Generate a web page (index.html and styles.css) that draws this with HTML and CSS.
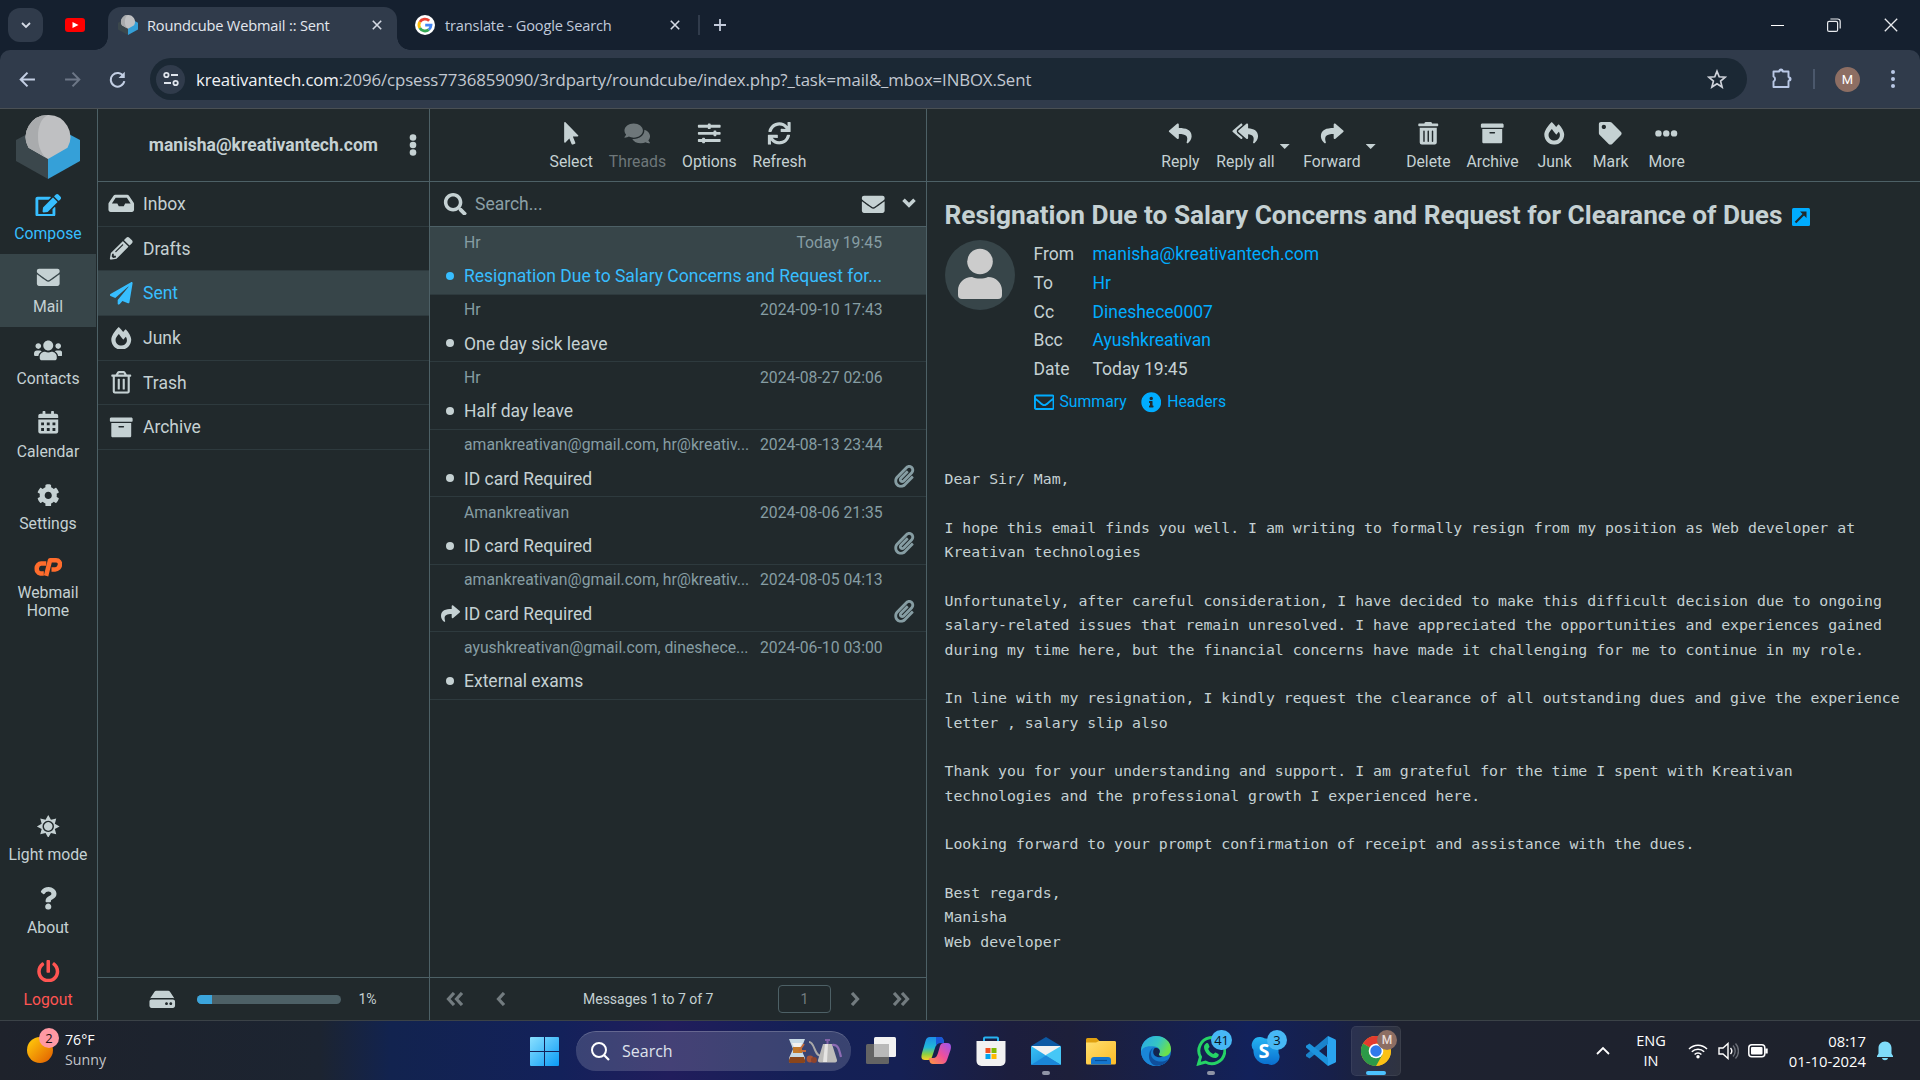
FILE: index.html
```html
<!DOCTYPE html>
<html lang="en">
<head>
<meta charset="utf-8">
<title>Roundcube Webmail :: Sent</title>
<link rel="stylesheet" href="styles.css">
</head>
<body>
<svg class="sprite" aria-hidden="true">
  <defs>
    <linearGradient id="gWin" x1="0" y1="0" x2="1" y2="1"><stop offset="0" stop-color="#8ae0ff"/><stop offset="1" stop-color="#0a9bf5"/></linearGradient>
    <linearGradient id="gSun" x1="0" y1="0" x2="1" y2="1"><stop offset="0.1" stop-color="#ffc60a"/><stop offset="1" stop-color="#e05a00"/></linearGradient>
    <linearGradient id="gCopA" x1="0" y1="0" x2="0" y2="1"><stop offset="0" stop-color="#1d8ee8"/><stop offset="0.45" stop-color="#21b8d8"/><stop offset="0.75" stop-color="#8fd03e"/><stop offset="1" stop-color="#ffd02a"/></linearGradient>
    <linearGradient id="gCopB" x1="1" y1="0" x2="0" y2="1"><stop offset="0" stop-color="#9a55f2"/><stop offset="0.5" stop-color="#f0509a"/><stop offset="1" stop-color="#ff9a3c"/></linearGradient>
    <linearGradient id="gEdge" x1="0" y1="0" x2="1" y2="0.4"><stop offset="0" stop-color="#2aa7e8"/><stop offset="0.6" stop-color="#35c6c4"/><stop offset="1" stop-color="#6be04c"/></linearGradient>
    <linearGradient id="gFold" x1="0" y1="0" x2="1" y2="1"><stop offset="0" stop-color="#ffdf70"/><stop offset="1" stop-color="#fdbc26"/></linearGradient>
    <linearGradient id="gMail" x1="0" y1="0" x2="1" y2="1"><stop offset="0" stop-color="#39c3f5"/><stop offset="1" stop-color="#1583d8"/></linearGradient>
    <linearGradient id="gSky" x1="0" y1="0" x2="0" y2="1"><stop offset="0" stop-color="#25b4f3"/><stop offset="1" stop-color="#0a6fd0"/></linearGradient>
  </defs>
  <symbol id="edit" viewBox="0 0 576 512"><path d="M402.6 83.2l90.2 90.2c3.8 3.8 3.8 10 0 13.8L274.4 405.6l-92.8 10.3c-12.4 1.4-22.9-9.1-21.5-21.5l10.3-92.8L388.8 83.2c3.8-3.8 10-3.8 13.8 0zm162-22.9l-48.8-48.8c-15.2-15.2-39.9-15.2-55.2 0l-35.4 35.4c-3.8 3.8-3.8 10 0 13.8l90.2 90.2c3.8 3.8 10 3.8 13.8 0l35.4-35.4c15.2-15.3 15.2-40 0-55.2zM384 346.2V448H64V128h229.8c3.2 0 6.2-1.3 8.5-3.5l40-40c7.6-7.6 2.2-20.5-8.5-20.5H48C21.5 64 0 85.5 0 112v352c0 26.5 21.5 48 48 48h352c26.5 0 48-21.5 48-48V306.2c0-10.7-12.9-16-20.5-8.5l-40 40c-2.2 2.3-3.5 5.3-3.5 8.5z"/></symbol>
  <symbol id="envelope" viewBox="0 0 512 512"><path d="M502.3 190.8c3.9-3.1 9.7-.2 9.7 4.7V400c0 26.5-21.5 48-48 48H48c-26.5 0-48-21.5-48-48V195.6c0-5 5.7-7.8 9.7-4.7 22.4 17.4 52.1 39.5 154.1 113.6 21.1 15.4 56.7 47.8 92.2 47.6 35.7.3 72-32.8 92.3-47.6 102-74.1 131.6-96.3 154-113.7zM256 320c23.2.4 56.6-29.2 73.4-41.4 132.7-96.3 142.8-104.7 173.4-128.7 5.8-4.5 9.2-11.5 9.2-18.9v-19c0-26.5-21.5-48-48-48H48c-26.5 0-48 21.5-48 48v19c0 7.4 3.4 14.3 9.2 18.9 30.6 23.9 40.7 32.4 173.4 128.7 16.8 12.2 50.2 41.8 73.4 41.4z"/></symbol>
  <symbol id="users" viewBox="0 0 640 512"><path d="M96 224c35.3 0 64-28.7 64-64s-28.7-64-64-64-64 28.7-64 64 28.7 64 64 64zm448 0c35.3 0 64-28.7 64-64s-28.7-64-64-64-64 28.7-64 64 28.7 64 64 64zm32 32h-64c-17.6 0-33.5 7.1-45.1 18.6 40.3 22.1 68.9 62 75.1 109.4h66c17.7 0 32-14.3 32-32v-32c0-35.3-28.7-64-64-64zm-256 0c61.9 0 112-50.1 112-112S381.9 32 320 32 208 82.1 208 144s50.1 112 112 112zm76.8 32h-8.3c-20.8 10-43.9 16-68.5 16s-47.6-6-68.5-16h-8.3C179.6 288 128 339.6 128 403.2V432c0 26.5 21.5 48 48 48h288c26.5 0 48-21.5 48-48v-28.8c0-63.6-51.6-115.2-115.2-115.2zm-223.7-13.4C161.5 263.1 145.6 256 128 256H64c-35.3 0-64 28.7-64 64v32c0 17.7 14.3 32 32 32h65.9c6.3-47.4 34.9-87.3 75.2-109.4z"/></symbol>
  <symbol id="calendar" viewBox="0 0 448 512"><path fill-rule="evenodd" d="M0 464c0 26.500 21.500 48 48 48h352c26.500 0 48-21.500 48-48V192H0v272zM320 256h64v64h-64zM320 384h64v64h-64zM192 256h64v64h-64zM192 384h64v64h-64zM64 256h64v64H64zM64 384h64v64H64zM400 64h-48V16c0-8.800-7.200-16-16-16h-32c-8.800 0-16 7.200-16 16v48H160V16c0-8.800-7.200-16-16-16h-32c-8.800 0-16 7.200-16 16v48H48C21.500 64 0 85.500 0 112v48h448v-48c0-26.500-21.500-48-48-48z"/></symbol>
  <symbol id="cog" viewBox="0 0 512 512"><path d="M487.4 315.7l-42.600-24.600c4.300-23.200 4.300-47 0-70.200l42.600-24.600c4.900-2.800 7.100-8.600 5.500-14-11.100-35.600-30-67.800-54.700-94.600-3.800-4.100-10-5.100-14.800-2.300L380.800 110c-17.900-15.400-38.500-27.300-60.800-35.100V25.800c0-5.600-3.900-10.500-9.400-11.700-36.700-8.200-74.300-7.800-109.200 0-5.500 1.200-9.400 6.100-9.400 11.700V75c-22.200 7.900-42.800 19.800-60.800 35.100L88.700 85.500c-4.900-2.800-11-1.900-14.800 2.300-24.700 26.700-43.600 58.900-54.700 94.600-1.700 5.400.6 11.200 5.500 14L67.300 221c-4.300 23.200-4.300 47 0 70.200l-42.600 24.600c-4.900 2.800-7.100 8.600-5.500 14 11.100 35.600 30 67.800 54.700 94.600 3.800 4.100 10 5.100 14.800 2.300l42.600-24.600c17.900 15.400 38.500 27.300 60.800 35.100v49.200c0 5.600 3.900 10.500 9.400 11.700 36.700 8.200 74.300 7.800 109.200 0 5.500-1.200 9.400-6.100 9.400-11.700v-49.200c22.200-7.900 42.800-19.800 60.800-35.100l42.600 24.600c4.900 2.800 11 1.900 14.800-2.300 24.700-26.700 43.600-58.900 54.700-94.600 1.500-5.500-.7-11.300-5.600-14.100zM256 336c-44.100 0-80-35.900-80-80s35.900-80 80-80 80 35.900 80 80-35.900 80-80 80z"/></symbol>
  <symbol id="cpanel" viewBox="0 0 29 20"><g fill="none" stroke="currentColor" stroke-width="4.600" stroke-linejoin="round"><path d="M12.500 6.500H7.300C1.800 6.500 1 15.800 6.500 16.500H10"/><path d="M12.300 19L16.300 3.200H22.500C28.500 3.200 27.300 12.500 21.500 12.500H17.800"/></g></symbol>
  <symbol id="inbox" viewBox="0 0 576 512"><path d="M567.938 243.908L462.250 85.374A48.003 48.003 0 0 0 422.311 64H153.689a48 48 0 0 0-39.938 21.374L8.062 243.908A47.994 47.994 0 0 0 0 270.533V400c0 26.510 21.490 48 48 48h480c26.510 0 48-21.490 48-48V270.533a47.994 47.994 0 0 0-8.062-26.625zM162.252 128h251.497l85.333 128H376l-32 64H232l-32-64H76.918l85.334-128z"/></symbol>
  <symbol id="pencil" viewBox="0 0 512 512"><path d="M497.900 142.100l-46.100 46.100c-4.700 4.700-12.300 4.700-17 0l-111-111c-4.700-4.700-4.700-12.300 0-17l46.100-46.100c18.700-18.700 49.100-18.700 67.900 0l60.100 60.100c18.800 18.700 18.800 49.100 0 67.900zM284.200 99.800L21.600 362.400.4 483.900c-2.900 16.400 11.400 30.600 27.800 27.800l121.500-21.300 262.600-262.600c4.700-4.700 4.700-12.300 0-17l-111-111c-4.800-4.700-12.400-4.700-17.100 0zM124.100 339.900c-5.500-5.500-5.500-14.300 0-19.800l154-154c5.500-5.500 14.300-5.500 19.800 0s5.500 14.300 0 19.800l-154 154c-5.500 5.500-14.300 5.500-19.800 0zM88 424h48v36.300l-64.500 11.300-31.100-31.100L51.700 376H88v48z"/></symbol>
  <symbol id="plane" viewBox="0 0 512 512"><path d="M476 3.200L12.500 270.600c-18.100 10.400-15.800 35.600 2.200 43.200L121 358.400l287.300-253.200c5.500-4.900 13.300 2.600 8.600 8.300L176 407v80.500c0 23.600 28.500 32.900 42.500 15.800L282 426l124.600 52.200c14.200 6 30.400-2.900 33-18.200l72-432C515 7.800 493.300-6.800 476 3.200z"/></symbol>
  <symbol id="fire" viewBox="0 0 448 512"><path d="M323.560 51.200c-20.800 19.300-39.580 39.590-56.220 59.970C240.080 73.620 206.280 35.530 168 0 69.740 91.170 0 209.960 0 281.600 0 408.850 100.290 512 224 512s224-103.150 224-230.400c0-53.270-51.980-163.140-124.440-230.400zm-19.470 340.650C282.430 407.010 255.720 416 226.860 416 154.710 416 96 368.260 96 290.750c0-38.610 24.310-72.630 72.790-130.750 6.930 7.980 98.830 125.340 98.830 125.340l58.630-66.880c4.140 6.850 7.910 13.550 11.270 19.970 27.350 52.190 15.810 118.970-33.430 153.420z"/></symbol>
  <symbol id="trash-o" viewBox="0 0 448 512"><path d="M268 416h24a12 12 0 0 0 12-12V188a12 12 0 0 0-12-12h-24a12 12 0 0 0-12 12v216a12 12 0 0 0 12 12zM432 80h-82.410l-34-56.700A48 48 0 0 0 274.410 0H173.590a48 48 0 0 0-41.160 23.300L98.410 80H16A16 16 0 0 0 0 96v16a16 16 0 0 0 16 16h16v336a48 48 0 0 0 48 48h288a48 48 0 0 0 48-48V128h16a16 16 0 0 0 16-16V96a16 16 0 0 0-16-16zM171.840 50.910A6 6 0 0 1 177 48h94a6 6 0 0 1 5.150 2.910L293.610 80H154.390zM368 464H80V128h288zm-212-48h24a12 12 0 0 0 12-12V188a12 12 0 0 0-12-12h-24a12 12 0 0 0-12 12v216a12 12 0 0 0 12 12z"/></symbol>
  <symbol id="trash" viewBox="0 0 448 512"><path d="M32 464a48 48 0 0 0 48 48h288a48 48 0 0 0 48-48V128H32zm272-256a16 16 0 0 1 32 0v224a16 16 0 0 1-32 0zm-96 0a16 16 0 0 1 32 0v224a16 16 0 0 1-32 0zm-96 0a16 16 0 0 1 32 0v224a16 16 0 0 1-32 0zM432 32H312l-9.400-18.700A24 24 0 0 0 281.100 0H166.800a23.720 23.720 0 0 0-21.400 13.300L136 32H16A16 16 0 0 0 0 48v32a16 16 0 0 0 16 16h416a16 16 0 0 0 16-16V48a16 16 0 0 0-16-16z"/></symbol>
  <symbol id="archive" viewBox="0 0 512 512"><path d="M32 448c0 17.700 14.300 32 32 32h384c17.700 0 32-14.300 32-32V160H32v288zm160-212c0-6.600 5.400-12 12-12h104c6.600 0 12 5.400 12 12v8c0 6.600-5.400 12-12 12H204c-6.600 0-12-5.400-12-12v-8zM480 32H32C14.300 32 0 46.300 0 64v48c0 8.800 7.200 16 16 16h480c8.800 0 16-7.200 16-16V64c0-17.700-14.300-32-32-32z"/></symbol>
  <symbol id="pointer" viewBox="0 0 320 512"><path d="M302.189 329.126H196.105l55.831 135.993c3.889 9.428-.555 19.999-9.444 23.999l-49.165 21.427c-9.165 4-19.443-.571-23.332-9.714l-53.053-129.136-86.664 89.138C18.729 472.710 0 463.554 0 447.977V18.299C0 1.899 19.921-6.096 30.277 5.443l284.412 292.542c11.472 11.179 3.007 31.141-12.500 31.141z"/></symbol>
  <symbol id="comments" viewBox="0 0 576 512"><path d="M416 192c0-88.400-93.100-160-208-160S0 103.600 0 192c0 34.300 14.100 65.900 38 92-13.400 30.200-35.500 54.200-35.800 54.500-2.200 2.300-2.800 5.700-1.500 8.700S4.800 352 8 352c36.600 0 66.900-12.300 88.700-25 32.200 15.700 70.300 25 111.300 25 114.900 0 208-71.600 208-160zm122 220c23.900-26 38-57.700 38-92 0-66.900-53.500-124.200-129.300-148.100.9 6.600 1.300 13.300 1.300 20.100 0 105.900-107.700 192-240 192-10.800 0-21.300-.8-31.700-1.900C207.800 439.600 281.800 480 368 480c41 0 79.100-9.200 111.300-25 21.800 12.700 52.100 25 88.700 25 3.200 0 6.100-1.900 7.300-4.800 1.300-2.900.7-6.300-1.500-8.700-.3-.3-22.400-24.200-35.800-54.500z"/></symbol>
  <symbol id="sliders" viewBox="0 0 512 512"><path d="M496 384H160v-16c0-8.800-7.200-16-16-16h-32c-8.800 0-16 7.200-16 16v16H16c-8.800 0-16 7.200-16 16v32c0 8.800 7.200 16 16 16h80v16c0 8.800 7.200 16 16 16h32c8.800 0 16-7.200 16-16v-16h336c8.800 0 16-7.200 16-16v-32c0-8.800-7.200-16-16-16zm0-160h-80v-16c0-8.800-7.200-16-16-16h-32c-8.800 0-16 7.200-16 16v16H16c-8.800 0-16 7.200-16 16v32c0 8.800 7.200 16 16 16h336v16c0 8.800 7.200 16 16 16h32c8.800 0 16-7.200 16-16v-16h80c8.800 0 16-7.200 16-16v-32c0-8.800-7.200-16-16-16zm0-160H288V48c0-8.800-7.200-16-16-16h-32c-8.800 0-16 7.200-16 16v16H16C7.200 64 0 71.200 0 80v32c0 8.800 7.200 16 16 16h208v16c0 8.800 7.200 16 16 16h32c8.800 0 16-7.200 16-16v-16h208c8.800 0 16-7.200 16-16V80c0-8.800-7.200-16-16-16z"/></symbol>
  <symbol id="sync" viewBox="0 0 512 512"><path d="M440.650 12.570l4 82.770A247.160 247.160 0 0 0 255.830 8C134.730 8 33.910 94.920 12.290 209.820A12 12 0 0 0 24.090 224h49.050a12 12 0 0 0 11.670-9.260 175.910 175.910 0 0 1 317-56.940l-101.460-4.860a12 12 0 0 0-12.570 12v47.410a12 12 0 0 0 12 12H500a12 12 0 0 0 12-12V12a12 12 0 0 0-12-12h-47.370a12 12 0 0 0-11.980 12.570zM255.830 432a175.610 175.610 0 0 1-146-77.800l101.800 4.870a12 12 0 0 0 12.570-12v-47.400a12 12 0 0 0-12-12H12a12 12 0 0 0-12 12V500a12 12 0 0 0 12 12h47.350a12 12 0 0 0 12-12.600l-4.150-82.570A247.170 247.170 0 0 0 255.830 504c121.110 0 221.930-86.920 243.550-201.820a12 12 0 0 0-11.800-14.180h-49.050a12 12 0 0 0-11.670 9.260A175.860 175.860 0 0 1 255.830 432z"/></symbol>
  <symbol id="search" viewBox="0 0 512 512"><path d="M505 442.700L405.300 343c-4.500-4.500-10.600-7-17-7H372c27.600-35.300 44-79.700 44-128C416 93.100 322.900 0 208 0S0 93.100 0 208s93.100 208 208 208c48.300 0 92.700-16.400 128-44v16.300c0 6.400 2.500 12.500 7 17l99.700 99.700c9.400 9.400 24.600 9.400 33.900 0l28.300-28.300c9.400-9.400 9.400-24.600.1-34zM208 336c-70.700 0-128-57.200-128-128 0-70.700 57.200-128 128-128 70.700 0 128 57.200 128 128 0 70.700-57.200 128-128 128z"/></symbol>
  <symbol id="reply" viewBox="0 0 512 512"><path d="M8.309 189.836L184.313 37.851C199.719 24.546 224 35.347 224 56.015v80.053c160.629 1.839 288 34.032 288 186.258 0 61.441-39.581 122.309-83.333 154.132-13.653 9.931-33.111-2.533-28.077-18.631 45.344-145.012-21.507-183.510-176.590-185.742V360c0 20.700-24.300 31.453-39.687 18.164l-176.004-152c-11.071-9.562-11.086-26.753 0-36.328z"/></symbol>
  <symbol id="forward" viewBox="0 0 512 512"><path d="M503.691 189.836L327.687 37.851C312.281 24.546 288 35.347 288 56.015v80.053C127.371 137.907 0 170.100 0 322.326c0 61.441 39.581 122.309 83.333 154.132 13.653 9.931 33.111-2.533 28.077-18.631C66.066 312.814 132.917 274.316 288 272.085V360c0 20.700 24.300 31.453 39.687 18.164l176.004-152c11.071-9.562 11.086-26.753 0-36.328z"/></symbol>
  <symbol id="replyall" viewBox="0 0 576 512"><path d="M136.309 189.836L312.313 37.851C327.720 24.546 352 35.348 352 56.015v82.763c129.182 10.231 224 52.212 224 183.548 0 61.441-39.582 122.309-83.333 154.132-13.653 9.931-33.111-2.533-28.077-18.631 38.512-123.162-3.922-169.482-112.590-182.015v84.175c0 20.701-24.300 31.453-39.687 18.164L136.309 226.164c-11.071-9.561-11.086-26.753 0-36.328zm-128 36.328L184.313 378.150C199.700 391.439 224 380.687 224 359.986v-15.818l-108.606-93.785A55.960 55.960 0 0 1 96 207.998a55.953 55.953 0 0 1 19.393-42.380L224 71.832V56.015c0-20.667-24.280-31.469-39.687-18.164L8.309 189.836c-11.086 9.575-11.071 26.767 0 36.328z"/></symbol>
  <symbol id="tag" viewBox="0 0 512 512"><path d="M0 252.118V48C0 21.490 21.490 0 48 0h204.118a48 48 0 0 1 33.941 14.059l211.882 211.882c18.745 18.745 18.745 49.137 0 67.882L293.823 497.941c-18.745 18.745-49.137 18.745-67.882 0L14.059 286.059A48 48 0 0 1 0 252.118zM112 64c-26.510 0-48 21.490-48 48s21.490 48 48 48 48-21.490 48-48-21.490-48-48-48z"/></symbol>
  <symbol id="more" viewBox="0 0 512 512"><circle cx="80" cy="256" r="72"/><circle cx="256" cy="256" r="72"/><circle cx="432" cy="256" r="72"/></symbol>
  <symbol id="clip" viewBox="0 0 448 512"><path d="M43.246 466.142c-58.430-60.289-57.341-157.511 1.386-217.581L254.392 34c44.316-45.332 116.351-45.336 160.671 0 43.890 44.894 43.943 117.329 0 162.276L232.214 383.128c-29.855 30.537-78.633 30.111-107.982-.998-28.275-29.970-27.368-77.473 1.452-106.953l143.743-146.835c6.182-6.314 16.312-6.422 22.626-.241l22.861 22.379c6.315 6.182 6.422 16.312.241 22.626L171.427 319.927c-4.932 5.045-5.236 13.428-.648 18.292 4.372 4.634 11.245 4.711 15.688.165l182.849-186.851c19.613-20.062 19.613-52.725-.011-72.798-19.189-19.627-49.957-19.637-69.154 0L90.390 293.295c-34.763 35.560-35.299 93.120-1.191 128.313 34.010 35.093 88.985 35.137 123.058.286l172.060-175.999c6.177-6.319 16.307-6.433 22.626-.256l22.877 22.364c6.319 6.177 6.434 16.307.256 22.626l-172.060 175.998c-59.576 60.938-155.943 60.216-214.770-.485z"/></symbol>
  <symbol id="power" viewBox="0 0 512 512"><path d="M400 54.100c63 45 104 118.600 104 201.900 0 136.800-110.800 247.700-247.500 248C120 504.300 8.200 393 8 256.400 7.900 173.100 48.900 99.300 111.800 54.200c11.700-8.300 28-4.800 35 7.700L162.600 90c5.900 10.500 3.100 23.800-6.600 31-41.500 30.800-68 79.600-68 134.900-.1 92.300 74.500 168.100 168 168.100 91.600 0 168.600-74.200 168-169.100-.3-51.800-24.700-101.800-68.100-134-9.700-7.200-12.400-20.500-6.500-30.900l15.800-28.100c7-12.400 23.200-16.100 34.800-7.800zM296 264V24c0-13.300-10.700-24-24-24h-32c-13.300 0-24 10.700-24 24v240c0 13.300 10.700 24 24 24h32c13.300 0 24-10.700 24-24z"/></symbol>
  <symbol id="question" viewBox="0 0 384 512"><path d="M202.021 0C122.202 0 70.503 32.703 29.914 91.026c-7.363 10.580-5.093 25.086 5.178 32.874l43.138 32.709c10.373 7.865 25.132 6.026 33.253-4.148 25.049-31.381 43.630-49.449 82.757-49.449 30.764 0 68.816 19.799 68.816 49.631 0 22.552-18.617 34.134-48.993 51.164-35.423 19.860-82.299 44.576-82.299 106.405V320c0 13.255 10.745 24 24 24h72.471c13.255 0 24-10.745 24-24v-5.773c0-42.860 125.268-44.645 125.268-160.627C377.504 66.256 286.902 0 202.021 0zM192 373.459c-38.196 0-69.271 31.075-69.271 69.271 0 38.195 31.075 69.270 69.271 69.270s69.271-31.075 69.271-69.271-31.075-69.270-69.271-69.270z"/></symbol>
  <symbol id="sun" viewBox="0 0 512 512"><path fill-rule="evenodd" d="M256 0l61 108 119-32-32 119 108 61-108 61 32 119-119-32-61 108-61-108-119 32 32-119L0 256l108-61L76 76l119 32zM256 128a128 128 0 1 0 .1 0zM256 160a96 96 0 1 1-.1 0z"/></symbol>
  <symbol id="hdd" viewBox="0 0 576 512"><path d="M576 304v96c0 26.510-21.490 48-48 48H48c-26.510 0-48-21.490-48-48v-96c0-26.510 21.490-48 48-48h480c26.510 0 48 21.490 48 48zm-48-80a79.557 79.557 0 0 1 30.777 6.165L462.250 85.374A48.003 48.003 0 0 0 422.311 64H153.689a48 48 0 0 0-39.938 21.374L17.223 230.165A79.557 79.557 0 0 1 48 224h480zm-48 96c-17.673 0-32 14.327-32 32s14.327 32 32 32 32-14.327 32-32-14.327-32-32-32zm-96 0c-17.673 0-32 14.327-32 32s14.327 32 32 32 32-14.327 32-32-14.327-32-32-32z"/></symbol>
  <symbol id="envelope-o" viewBox="0 0 512 512"><path d="M464 64H48C21.490 64 0 85.490 0 112v288c0 26.510 21.490 48 48 48h416c26.510 0 48-21.490 48-48V112c0-26.510-21.490-48-48-48zm0 48v40.805c-22.422 18.259-58.168 46.651-134.587 106.490-16.841 13.247-50.201 45.072-73.413 44.701-23.208.375-56.579-31.459-73.413-44.701C106.180 199.465 70.425 171.067 48 152.805V112h416zM48 400V214.398c22.914 18.251 55.409 43.862 104.938 82.646 21.857 17.205 60.134 55.186 103.062 54.955 42.717.231 80.509-37.199 103.053-54.947 49.528-38.783 82.032-64.401 104.947-82.653V400H48z"/></symbol>
  <symbol id="info" viewBox="0 0 512 512"><path d="M256 8C119.043 8 8 119.083 8 256c0 136.997 111.043 248 248 248s248-111.003 248-248C504 119.083 392.957 8 256 8zm0 110c23.196 0 42 18.804 42 42s-18.804 42-42 42-42-18.804-42-42 18.804-42 42-42zm56 254c0 6.627-5.373 12-12 12h-88c-6.627 0-12-5.373-12-12v-24c0-6.627 5.373-12 12-12h12v-64h-12c-6.627 0-12-5.373-12-12v-24c0-6.627 5.373-12 12-12h64c6.627 0 12 5.373 12 12v100h12c6.627 0 12 5.373 12 12v24z"/></symbol>
  <symbol id="logo" viewBox="0 0 64 64"><path fill="#3b474c" d="M0 25l32-17v56L0 46z"/><path fill="#35a0d8" d="M64 25L32 8v56l32-18z"/><path fill="#bfc0c2" d="M32 0a22 22 0 0 1 19.500 32.800L32 44 12.500 32.800A22 22 0 0 1 32 0z"/><path fill="#a9abad" d="M32 0C25 3 22 12 22 21s2 15 7 21l-16.500-9.200A22 22 0 0 1 32 0z"/></symbol>
  <symbol id="x" viewBox="0 0 10 10"><path d="M.8.8l8.400 8.400M9.200.8L.8 9.200" fill="none" stroke="currentColor" stroke-width="1.600"/></symbol>
</svg>

<header class="browser">
  <div class="tabstrip">
    <span class="tab-search"><svg width="12" height="12" viewBox="0 0 12 12"><path d="M2 4l4 4 4-4" fill="none" stroke="#d5dbe6" stroke-width="1.800"/></svg></span>
    <svg class="pinned" width="20" height="14" viewBox="0 0 20 14"><rect width="20" height="14" rx="3" fill="#f00"/><path d="M7.500 4l6 3-6 3z" fill="#fff"/></svg>
    <div class="tab active">
      <svg class="fav"><use href="#logo"/></svg>
      <span class="tab-title">Roundcube Webmail :: Sent</span>
      <svg class="close"><use href="#x"/></svg>
    </div>
    <div class="tab second">
      <svg class="fav" viewBox="0 0 20 20"><circle cx="10" cy="10" r="10" fill="#fff"/><g fill="none" stroke-width="2.800"><path d="M14.200 5.800A6 6 0 0 0 4.800 7" stroke="#ea4335"/><path d="M4.800 7a6 6 0 0 0 0 6" stroke="#fbbc05"/><path d="M4.800 13a6 6 0 0 0 9 1.600" stroke="#34a853"/><path d="M13.800 14.600A6 6 0 0 0 16 10.200H10.200" stroke="#4285f4"/></g></svg>
      <span class="tab-title">translate - Google Search</span>
      <svg class="close"><use href="#x"/></svg>
    </div>
    <span class="tab-sep"></span>
    <svg class="newtab" width="14" height="14" viewBox="0 0 14 14"><path d="M7 1v12M1 7h12" stroke="#c3cbdb" stroke-width="1.800"/></svg>
    <div class="winctl">
      <svg width="14" height="14" viewBox="0 0 14 14"><path d="M1 7.500h13" stroke="#fff"/></svg>
      <svg width="14" height="14" viewBox="0 0 14 14"><g fill="none" stroke="#e8eaee" stroke-width="1.200"><rect x=".6" y="3.400" width="10" height="10" rx="1.500"/><path d="M3.400 1h7.200a2.600 2.600 0 0 1 2.600 2.600v7"/></g></svg>
      <svg width="14" height="14" viewBox="0 0 14 14"><path d="M.8.800l12.400 12.400M13.200.800L.8 13.200" stroke="#e8eaee" stroke-width="1.300"/></svg>
    </div>
  </div>
  <div class="navbar">
    <svg class="nav" viewBox="0 0 16 16"><path d="M15 8H2M8 1.500L1.600 8 8 14.500" fill="none" stroke="#c3cfe4" stroke-width="1.900"/></svg>
    <svg class="nav" viewBox="0 0 16 16"><path d="M1 8h13M8 1.500L14.400 8 8 14.500" fill="none" stroke="#6d7787" stroke-width="1.900"/></svg>
    <svg class="nav" viewBox="0 0 16 16"><path d="M13.600 5A6.400 6.400 0 1 0 14.400 9.500" fill="none" stroke="#c3cfe4" stroke-width="1.900"/><path d="M14.800.8v5.700H9z" fill="#c3cfe4"/></svg>
    <div class="omnibox">
      <span class="site"><svg width="16" height="16" viewBox="0 0 16 16"><g fill="none" stroke="#dfe4ec" stroke-width="1.800"><circle cx="3.400" cy="4" r="2.200"/><path d="M8 4h7M1 12h7"/><circle cx="12.600" cy="12" r="2.200"/></g></svg></span>
      <span class="url"><b>kreativantech.com</b>:2096/cpsess7736859090/3rdparty/roundcube/index.php?_task=mail&amp;_mbox=INBOX.Sent</span>
      <svg class="star" viewBox="0 0 20 20"><path d="M10 2.200l2.200 5.600 6 .4-4.600 3.900 1.500 5.900-5.100-3.300L4.900 18l1.500-5.900L1.800 8.200l6-.4z" fill="none" stroke="#cfd3da" stroke-width="1.700"/></svg>
    </div>
    <svg class="puzzle" viewBox="0 0 22 22"><path d="M2.500 4.500H8a2.200 2.200 0 0 1 4 0h5.500V10a2.200 2.200 0 0 1 0 4v6h-15v-5.500a2.800 2.800 0 0 0 0-5z" fill="none" stroke="#b9c8e6" stroke-width="1.900" stroke-linejoin="round"/><path d="M7.500 4a2.500 2.500 0 0 1 5 0zM18 9.500a2.500 2.500 0 0 1 0 5z" fill="#b9c8e6"/></svg>
    <span class="nav-sep"></span>
    <span class="profile">M</span>
    <svg class="dots" viewBox="0 0 4 20"><circle cx="2" cy="3" r="2"/><circle cx="2" cy="10" r="2"/><circle cx="2" cy="17" r="2"/></svg>
  </div>
</header>

<main class="app">
  <nav class="menu">
    <svg class="brand"><use href="#logo"/></svg>
    <a class="item compose"><svg class="ic"><use href="#edit"/></svg><span>Compose</span></a>
    <a class="item selected"><svg class="ic"><use href="#envelope"/></svg><span>Mail</span></a>
    <a class="item"><svg class="ic"><use href="#users"/></svg><span>Contacts</span></a>
    <a class="item"><svg class="ic"><use href="#calendar"/></svg><span>Calendar</span></a>
    <a class="item"><svg class="ic"><use href="#cog"/></svg><span>Settings</span></a>
    <a class="item home"><svg class="ic cp"><use href="#cpanel"/></svg><span>Webmail Home</span></a>
    <div class="grow"></div>
    <a class="item"><svg class="ic"><use href="#sun"/></svg><span>Light mode</span></a>
    <a class="item"><svg class="ic"><use href="#question"/></svg><span>About</span></a>
    <a class="item logout"><svg class="ic"><use href="#power"/></svg><span>Logout</span></a>
  </nav>

  <section class="folders">
    <div class="head user"><span>manisha@kreativantech.com</span><svg class="kebab" viewBox="0 0 8 22"><circle cx="4" cy="3.500" r="3.300"/><circle cx="4" cy="11" r="3.300"/><circle cx="4" cy="18.500" r="3.300"/></svg></div>
    <ul class="folder-list">
      <li><svg class="ic"><use href="#inbox"/></svg>Inbox</li>
      <li><svg class="ic"><use href="#pencil"/></svg>Drafts</li>
      <li class="selected"><svg class="ic"><use href="#plane"/></svg>Sent</li>
      <li><svg class="ic"><use href="#fire"/></svg>Junk</li>
      <li><svg class="ic"><use href="#trash-o"/></svg>Trash</li>
      <li><svg class="ic"><use href="#archive"/></svg>Archive</li>
    </ul>
    <div class="foot quota"><svg class="ic"><use href="#hdd"/></svg><span class="bar"><i></i></span><span>1%</span></div>
  </section>

  <section class="list">
    <div class="head tools">
      <a><svg class="ic"><use href="#pointer"/></svg>Select</a>
      <a class="off"><svg class="ic"><use href="#comments"/></svg>Threads</a>
      <a><svg class="ic"><use href="#sliders"/></svg>Options</a>
      <a><svg class="ic"><use href="#sync"/></svg>Refresh</a>
    </div>
    <div class="searchbar"><svg class="ic"><use href="#search"/></svg><span>Search...</span><svg class="ic"><use href="#envelope"/></svg><svg class="chev" viewBox="0 0 14 10"><path d="M1.500 1.800L7 7.300l5.500-5.500" fill="none" stroke="currentColor" stroke-width="3.600"/></svg></div>
    <ul class="messages">
      <li class="selected"><span class="from">Hr</span><span class="date">Today 19:45</span><i class="dot"></i><span class="subj">Resignation Due to Salary Concerns and Request for...</span></li>
      <li><span class="from">Hr</span><span class="date">2024-09-10 17:43</span><i class="dot"></i><span class="subj">One day sick leave</span></li>
      <li><span class="from">Hr</span><span class="date">2024-08-27 02:06</span><i class="dot"></i><span class="subj">Half day leave</span></li>
      <li><span class="from">amankreativan@gmail.com, hr@kreativ...</span><span class="date">2024-08-13 23:44</span><i class="dot"></i><span class="subj">ID card Required</span><svg class="ic att"><use href="#clip"/></svg></li>
      <li><span class="from">Amankreativan</span><span class="date">2024-08-06 21:35</span><i class="dot"></i><span class="subj">ID card Required</span><svg class="ic att"><use href="#clip"/></svg></li>
      <li><span class="from">amankreativan@gmail.com, hr@kreativ...</span><span class="date">2024-08-05 04:13</span><svg class="fwd"><use href="#forward"/></svg><span class="subj">ID card Required</span><svg class="ic att"><use href="#clip"/></svg></li>
      <li><span class="from">ayushkreativan@gmail.com, dineshece...</span><span class="date">2024-06-10 03:00</span><i class="dot"></i><span class="subj">External exams</span></li>
    </ul>
    <div class="foot pager">
      <svg class="pg first" viewBox="0 0 18 14"><path d="M8 1L2.500 7 8 13M16 1l-5.500 6 5.500 6"/></svg>
      <svg class="pg prev" viewBox="0 0 10 14"><path d="M8 1L2.500 7 8 13"/></svg>
      <span class="count">Messages 1 to 7 of 7</span>
      <span class="page">1</span>
      <svg class="pg next" viewBox="0 0 10 14"><path d="M2 1l5.500 6L2 13"/></svg>
      <svg class="pg last" viewBox="0 0 18 14"><path d="M2 1l5.500 6L2 13M10 1l5.500 6-5.500 6"/></svg>
    </div>
  </section>

  <section class="content">
    <div class="head tools">
      <a><svg class="ic"><use href="#reply"/></svg>Reply</a>
      <a><svg class="ic"><use href="#replyall"/></svg>Reply all</a><i class="caret"></i>
      <a><svg class="ic"><use href="#forward"/></svg>Forward</a><i class="caret wide"></i>
      <a><svg class="ic"><use href="#trash"/></svg>Delete</a>
      <a><svg class="ic"><use href="#archive"/></svg>Archive</a>
      <a><svg class="ic"><use href="#fire"/></svg>Junk</a>
      <a><svg class="ic"><use href="#tag"/></svg>Mark</a>
      <a><svg class="ic"><use href="#more"/></svg>More</a>
    </div>
    <article class="mail">
      <h1>Resignation Due to Salary Concerns and Request for Clearance of Dues <svg class="ext" viewBox="0 0 18 18"><rect width="18" height="18" rx="1.500" fill="#00acff"/><path d="M3.500 14.500l8-8" stroke="#21292c" stroke-width="2.200"/><path d="M8 3.500h6.500V10z" fill="#21292c"/></svg></h1>
      <div class="meta">
        <svg class="avatar" viewBox="0 0 70 70"><circle cx="35" cy="35" r="35" fill="#374549"/><circle cx="35" cy="21.500" r="12.800" fill="#ccc"/><path d="M27 37c5 2 11 2 16 0 8 0 14 6 14 13.500V55a4 4 0 0 1-4 4H17a4 4 0 0 1-4-4v-4.500C13 43 19 37 27 37z" fill="#ccc"/></svg>
        <div>
          <dl>
            <dt>From</dt><dd class="link">manisha@kreativantech.com</dd>
            <dt>To</dt><dd class="link">Hr</dd>
            <dt>Cc</dt><dd class="link">Dineshece0007</dd>
            <dt>Bcc</dt><dd class="link">Ayushkreativan</dd>
            <dt>Date</dt><dd>Today 19:45</dd>
          </dl>
          <div class="links"><svg><use href="#envelope-o"/></svg><span>Summary</span><svg><use href="#info"/></svg><span>Headers</span></div>
        </div>
      </div>
      <pre class="body">Dear Sir/ Mam,

I hope this email finds you well. I am writing to formally resign from my position as Web developer at
Kreativan technologies

Unfortunately, after careful consideration, I have decided to make this difficult decision due to ongoing
salary-related issues that remain unresolved. I have appreciated the opportunities and experiences gained
during my time here, but the financial concerns have made it challenging for me to continue in my role.

In line with my resignation, I kindly request the clearance of all outstanding dues and give the experience
letter , salary slip also

Thank you for your understanding and support. I am grateful for the time I spent with Kreativan
technologies and the professional growth I experienced here.

Looking forward to your prompt confirmation of receipt and assistance with the dues.

Best regards,
Manisha
Web developer</pre>
    </article>
  </section>
</main>

<footer class="taskbar">
  <div class="weather">
    <span class="sunny"><svg width="26" height="26" viewBox="0 0 26 26"><circle cx="13" cy="13" r="13" fill="url(#gSun)"/></svg><b class="badge pink">2</b></span>
    <div><div>76°F</div><div class="dim">Sunny</div></div>
  </div>
  <div class="apps">
    <svg class="win" viewBox="0 0 29 29"><path fill="url(#gWin)" d="M1 0h13v14H0V1a1 1 0 0 1 1-1zM15 0h13a1 1 0 0 1 1 1v13H15zM0 15h14v14H1a1 1 0 0 1-1-1zM15 15h14v13a1 1 0 0 1-1 1H15z"/></svg>
    <div class="tsearch">
      <svg width="19" height="19" viewBox="0 0 19 19"><circle cx="8" cy="8" r="7" fill="none" stroke="#fff" stroke-width="2"/><path d="M13 13l5 5" stroke="#fff" stroke-width="2.200"/></svg>
      <span>Search</span>
      <svg width="54" height="26" viewBox="0 0 54 26"><path d="M1 1h16l-4 10 4 9v3a2 2 0 0 1-2 2H3a2 2 0 0 1-2-2v-3l4-9z" fill="#c9dbe6"/><path d="M4 5h10l-3 6H7z" fill="#f3f1ee"/><path d="M5 9h9v6H5z" fill="#c27a2c"/><path d="M2 19h14l1 3a2 2 0 0 1-2 3H3a2 2 0 0 1-2-3z" fill="#8a451b"/><path d="M11 13l5-7M14 13h4" stroke="#c66a38" stroke-width="1.800"/><circle cx="22" cy="21" r="3.400" fill="#a65338"/><circle cx="26" cy="22" r="3" fill="#8c432e"/><path d="M21 4c6 0 5 14 12 14" fill="none" stroke="#aaa9a8" stroke-width="2"/><path d="M35 6h9l5 16a2 2 0 0 1-2 2.500H32a2 2 0 0 1-2-2.500z" fill="#bdbcba"/><path d="M37 6h3l-1 18h-4z" fill="#e6e5e3"/><path d="M37 2h5M39.500 2v4" stroke="#8062a8" stroke-width="2"/><path d="M44 7c6-1 7 4 9 12" fill="none" stroke="#8d6cb4" stroke-width="2.200"/></svg>
    </div>
    <span class="app-ic"><svg viewBox="0 0 30 30"><rect y="8" width="23" height="20" rx="1.500" fill="#646464"/><rect x="8" y="1" width="22" height="20" rx="1.500" fill="#f2f2f2"/><path d="M8 8h15v13H8z" fill="#b9b9b9"/></svg></span>
    <span class="app-ic"><svg viewBox="0 0 30 30"><path d="M9 1h10c2 0 3 1 3.500 3L23 7h-4c-3 0-4 2-5 5l-3 9c-.6 2-2 3-4 3H4c-4 0-4-3-3-7l3.500-12C5.200 2.500 6.500 1 9 1z" fill="url(#gCopA)"/><path d="M15 1h4c2 0 3 1 3.500 3L23 7h-4c-2 0-3 1-4 3z" fill="#1b56d8"/><path d="M21 28H12c-2 0-3-1-3.500-3L8 22h4c3 0 4-2 5-5l2-7c.6-2 2-3 4-3h3c4 0 4.500 3 3.500 7l-3.500 10c-1 2.500-2.500 4-5 4z" fill="url(#gCopB)"/></svg></span>
    <span class="app-ic"><svg viewBox="0 0 30 30"><path d="M8 5V2.500A1 1 0 0 1 9 1.500h12a1 1 0 0 1 1 1V5" fill="none" stroke="#27b2f0" stroke-width="2"/><path d="M.5 5h29v20a5 5 0 0 1-5 5h-19a5 5 0 0 1-5-5z" fill="#f2f2f2"/><path fill="#f25022" d="M9.500 12h5v5h-5z"/><path fill="#7fba00" d="M15.500 12h5v5h-5z"/><path fill="#00a4ef" d="M9.500 18h5v5h-5z"/><path fill="#ffb900" d="M15.500 18h5v5h-5z"/></svg></span>
    <span class="app-ic"><svg viewBox="0 0 30 30"><path d="M0 10L15 1l15 9v7H0z" fill="#0c59a4"/><path d="M1 10h28v6l-14 9L1 16z" fill="#f1f1f1"/><path d="M0 10l30 19H1a1 1 0 0 1-1-1z" fill="url(#gMail)"/><path d="M30 10v19L14 19.500z" fill="#46c7f6"/><path d="M0 29l15-9.500L30 29z" fill="#1a86d8"/></svg><i class="run"></i></span>
    <span class="app-ic"><svg viewBox="0 0 30 30"><path d="M0 3.500A1.500 1.500 0 0 1 1.500 2h9l3 3H28a2 2 0 0 1 2 2v6H0z" fill="#e0a010"/><path d="M0 6.500h10L13 5h15.500A1.500 1.500 0 0 1 30 6.500V27a1.500 1.500 0 0 1-1.500 1.500h-27A1.500 1.500 0 0 1 0 27z" fill="url(#gFold)"/><path d="M5 28.500V24a3 3 0 0 1 3-3h14a3 3 0 0 1 3 3v4.500z" fill="#1477cf"/><path d="M9 24.500h12" stroke="#0a4f95" stroke-width="1.200"/></svg></span>
    <span class="app-ic"><svg viewBox="0 0 30 30"><circle cx="15" cy="15" r="15" fill="#1478cc"/><path d="M0 14C1 5 8 0 15 0c9 0 15 6 15 13 0 5-4 7.500-8 7.500-3 0-5-1-4-3 2-3 0-7-5-7-5 0-11 2-13 7z" fill="url(#gEdge)"/><path d="M13 11c-5 2-7 8-3 13 4 4.500 11 5 17 0-3 4-8 6-12 6C6 30 .5 23.500 0 16c1-5 8-7 13-5z" fill="#1a86d8"/><path d="M12 12c-4 5-2 11 4 13 4 1.200 8 .5 12-2-3 5-9 7.500-14 6.500-6-2-9-12-2-17.500z" fill="#0f4f9c"/><path d="M14 12c4-.5 6 2.500 4.200 5.500-1 2 1 3 4 3-4 2-10 0-10-4.500 0-2 .8-3.500 1.800-4z" fill="#12244f"/></svg></span>
    <span class="app-ic"><svg viewBox="0 0 30 30"><path d="M2.500 28l2-7A13 13 0 1 1 9.500 26z" fill="none" stroke="#25d366" stroke-width="3"/><path d="M10 7.500c1-.8 2-.5 2.500.5l1 2.500c.2.800-1.300 2-1.300 2.500 1 2.300 2.500 3.800 5 5 .8 0 1.700-1.700 2.500-1.500l2.700 1.400c1 1-.4 4-3.400 4.100C14 22 8 16 8 11c0-1.500.8-2.800 2-3.500z" fill="#25d366"/></svg><b class="badge">41</b><i class="run"></i></span>
    <span class="app-ic"><svg viewBox="0 0 30 30"><path d="M9 1a8 8 0 0 1 5 1.500A13 13 0 0 1 27.500 17 8 8 0 0 1 17 28 13 13 0 0 1 2.500 14 8 8 0 0 1 9 1z" fill="url(#gSky)"/></svg><em class="skype">S</em><b class="badge">3</b></span>
    <span class="app-ic"><svg viewBox="0 0 30 30"><path d="M22 0l7 3.200c.6.300 1 .8 1 1.500v20.600c0 .7-.4 1.200-1 1.500L22 30 21 22V8z" fill="#2aa4f0"/><path d="M22 0v8L3.500 22.500 0 20.300v-1.800z" fill="#1a83cc"/><path d="M22 30v-8L3.500 7.500 0 9.700v1.800z" fill="#1c93dd"/></svg></span>
    <span class="app-ic focus"><svg viewBox="0 0 30 30"><circle cx="15" cy="15" r="15" fill="#fbc116"/><path d="M15 15L2 7.500A15 15 0 0 1 28 7.500H15z" fill="#e33b2e"/><path d="M15 8H28.200A15 15 0 0 1 15 30l6.500-11.500z" fill="#fbc116"/><path d="M2 7.500A15 15 0 0 0 15 30l6.500-11.500L15 15z" fill="#2c9a48"/><circle cx="15" cy="15" r="7.300" fill="#fff"/><circle cx="15" cy="15" r="5.700" fill="#3079ea"/></svg><b class="badge brown">M</b><i class="run on"></i></span>
  </div>
  <div class="tray">
    <svg class="up" width="14" height="9" viewBox="0 0 14 9"><path d="M1 8l6-6 6 6" fill="none" stroke="#fff" stroke-width="1.800"/></svg>
    <div class="lang">ENG<br>IN</div>
    <svg class="wifi" width="20" height="16" viewBox="0 0 20 16"><g fill="none" stroke="#fff" stroke-width="1.500"><path d="M1 6a12.700 12.700 0 0 1 18 0M3.800 8.800a8.800 8.800 0 0 1 12.400 0M6.600 11.500a4.800 4.800 0 0 1 6.800 0"/></g><circle cx="10" cy="13.800" r="1.700" fill="#fff"/></svg>
    <svg class="vol" width="21" height="18" viewBox="0 0 21 18"><g fill="none" stroke="#fff" stroke-width="1.400"><path d="M1 6h4l5-4.500v15L5 12H1z"/><path d="M12.500 6a4.500 4.500 0 0 1 0 6"/><path d="M15 3.500a8 8 0 0 1 0 11M17.500 1.500a11 11 0 0 1 0 15" stroke="#6c7078"/></g></svg>
    <svg class="bat" width="20" height="14" viewBox="0 0 20 14"><rect x=".8" y=".8" width="16" height="12" rx="3" fill="none" stroke="#fff" stroke-width="1.500"/><rect x="3" y="3" width="11.500" height="7.600" rx="1" fill="#fff"/><path d="M18.500 4.500v5" stroke="#fff" stroke-width="2.400"/></svg>
    <div class="clock">08:17<br>01-10-2024</div>
    <svg class="bell" width="18" height="20" viewBox="0 0 18 20"><path d="M9 .5c4 0 6.500 3 6.500 6.500v5.500L17 15v1H1v-1l1.500-2.500V7C2.500 3.500 5 .5 9 .5zM6 17h6c-.5 3-5.500 3-6 0z" fill="#7fdcfa"/></svg>
  </div>
</footer>
</body>
</html>
```

FILE: styles.css
```css
* { box-sizing: border-box; }
html, body { margin: 0; height: 1080px; overflow: hidden; }
body { width: 1920px; display: flex; flex-direction: column; background: #21292c; color: #c5d1d3; font-family: Roboto, "Liberation Sans", sans-serif; font-size: 17.5px; }
ul, dl, dd, pre, h1 { margin: 0; padding: 0; list-style: none; }
svg { display: block; flex: none; }
i, em { font-style: normal; }
.sprite { position: absolute; width: 0; height: 0; }
.ic { width: 28.5px; height: 22.75px; fill: currentColor; }

/* browser chrome */
.browser { height: 109px; flex: none; background: #15202f; font-family: "Open Sans", "Noto Sans", sans-serif; border-bottom: 1px solid #4a5054; }
.tabstrip { height: 50px; display: flex; align-items: center; padding-left: 8px; }
.tab-search { width: 35px; height: 34px; border-radius: 12px; background: #303b4b; display: grid; place-items: center; }
.pinned { margin: 0 23px 0 22px; }
.tab { display: flex; align-items: center; height: 43px; margin-top: 7px; padding-bottom: 7px; }
.tab.active { position: relative; width: 289px; background: #303b4b; border-radius: 13px 13px 0 0; padding: 0 15px 7px 10px; color: #e3e7ee; }
.tab.active::before, .tab.active::after { content: ""; position: absolute; bottom: 0; width: 13px; height: 13px; }
.tab.active::before { left: -13px; background: radial-gradient(circle at 0 0, transparent 12.5px, #303b4b 13px); }
.tab.active::after { right: -13px; background: radial-gradient(circle at 100% 0, transparent 12.5px, #303b4b 13px); }
.tab.second { width: 283px; padding-left: 18px; color: #c0cadb; }
.tab.second .fav { margin-right: 10px; }
.fav { width: 20px; height: 20px; margin-right: 9px; }
.tab-title { flex: 1; font-size: 14.6px; letter-spacing: -.16px; white-space: nowrap; }
.close { width: 10px; height: 10px; color: #d5dae4; }
.tab-sep { width: 2px; height: 20px; margin-left: 18px; background: #303b4b; }
.newtab { margin-left: 13px; }
.winctl { margin-left: auto; display: flex; gap: 43px; padding-right: 22px; }
.navbar { height: 58px; background: #303b4b; border-radius: 10px 10px 0 0; display: flex; align-items: center; padding-left: 19px; }
.nav { width: 17px; height: 17px; margin-right: 28px; }
.omnibox { width: 1597px; height: 42px; margin-left: -4px; border-radius: 21px; background: #1b2834; display: flex; align-items: center; padding: 0 20px 0 6px; }
.site { width: 29px; height: 29px; border-radius: 50%; background: #303b4b; display: grid; place-items: center; }
.url { flex: 1; margin-left: 11px; font-size: 16.8px; letter-spacing: -.1px; color: #c3c9d2; white-space: nowrap; }
.url b { font-weight: 400; color: #f0f2f5; }
.star { width: 20px; height: 20px; }
.puzzle { width: 22px; height: 22px; margin: 0 0 3px 24px; }
.nav-sep { width: 2px; height: 20px; margin-left: 20px; background: #4b586c; }
.profile { width: 25px; height: 25px; margin-left: 20px; border-radius: 50%; background: #8d6e63; color: #fff; font: 13px/25px Roboto, sans-serif; text-align: center; }
.dots { width: 4px; height: 20px; margin-left: 31px; fill: #b9c8e6; }

/* application */
.app { height: 912px; flex: none; display: flex; border-bottom: 1px solid #3b4247; }
.menu { width: 98px; border-right: 1px solid #4d6066; display: flex; flex-direction: column; font-size: 15.75px; line-height: 18px; }
.brand { width: 64px; height: 64px; margin: 6px 16px 2.500px; }
.item { height: 72.5px; width: 96px; display: flex; flex-direction: column; align-items: center; padding-top: 12px; text-align: center; }
.item span { margin-top: 9.200px; white-space: nowrap; }
.item.compose span { margin-top: 8.500px; }
.item.selected { background: #374549; }
.item.home span { white-space: normal; width: 70px; margin-top: 7px; }
.item .cp { color: #ff6c2c; height: 20px; margin-top: 1px; }
.compose { color: #37beff; }
.logout { color: #ff5552; }
.grow { flex: 1; }
.head { height: 73px; flex: none; border-bottom: 1px solid #4d6066; }
.foot { height: 43px; flex: none; border-top: 1px solid #4d6066; display: flex; align-items: center; margin-top: auto; font-size: 14px; }

.folders { width: 332px; border-right: 1px solid #4d6066; display: flex; flex-direction: column; }
.user { display: flex; align-items: center; justify-content: flex-end; padding-right: 12px; font-weight: 700; }
.kebab { width: 8px; height: 22px; margin-left: 31px; fill: currentColor; }
.folder-list li { height: 44.7px; display: flex; align-items: center; padding-left: 9px; border-bottom: 1px solid #2e3a3e; }
.folder-list .ic { margin-right: 7.500px; }
.folder-list .selected { background: #374549; color: #37beff; }
.quota { padding-left: 50px; }
.bar { width: 144px; height: 9px; margin: 0 18px 0 20px; border-radius: 5px; background: #4d6066; overflow: hidden; }
.bar i { display: block; width: 15px; height: 9px; background: #3ba5dc; }

.tools { display: flex; justify-content: center; gap: 16px; padding-top: 13px; font-size: 15.75px; line-height: 18px; }
.tools a { min-width: 40px; display: flex; flex-direction: column; align-items: center; white-space: nowrap; }
.tools .ic { margin-bottom: 8px; }
.tools .off { color: #6e777a; }
.caret { width: 10px; height: 5px; margin: 22px -2.500px 0 -11px; background: currentColor; clip-path: polygon(0 0, 100% 0, 50% 100%); }
.caret.wide { margin-right: 14.500px; }

.list { width: 497px; border-right: 1px solid #4d6066; display: flex; flex-direction: column; }
.searchbar { height: 45px; flex: none; border-bottom: 1px solid #4d6066; display: flex; align-items: center; padding: 0 10px 0 10.500px; }
.searchbar span { flex: 1; margin-left: 6px; color: #8b9fa5; }
.searchbar .chev { width: 14px; height: 10px; margin: 0 0 2px 14.500px; }
.messages li { height: 67.5px; display: grid; grid-template-columns: 34px 1fr 126px 40px; grid-template-rows: 31px 35.5px; align-items: center; border-bottom: 1px solid #2e3a3e; }
.messages .from { grid-column: 2; white-space: nowrap; }
.messages .from, .messages .date { font-size: 15.75px; line-height: 20px; color: #869da3; }
.messages .date { text-align: right; white-space: nowrap; margin-right: 4px; }
.messages .dot { grid-column: 1; grid-row: 2; width: 8px; height: 8px; margin-left: 16px; border-radius: 50%; background: currentColor; }
.messages .fwd { grid-column: 1; grid-row: 2; width: 19px; height: 19px; margin-left: 11px; fill: currentColor; }
.messages .subj { grid-column: 2 / 4; grid-row: 2; white-space: nowrap; line-height: 24px; margin-top: 1px; }
.messages .att { grid-column: 4; grid-row: 2; margin: -4px 0 0 4px; color: #869da3; }
.messages .selected { background: #374549; color: #37beff; }
.pager { color: #c5d1d3; }
.pg { height: 14px; fill: none; stroke: #737c80; stroke-width: 3.200; }
.pg.first { width: 18px; margin-left: 16px; }
.pg.prev { width: 10px; margin-left: 32px; }
.count { margin-left: 77px; width: 130px; white-space: nowrap; }
.page { width: 53px; height: 28px; margin-left: 65px; border: 1px solid #4d6066; border-radius: 4px; color: #737c80; text-align: center; line-height: 26px; }
.pg.next { width: 10px; margin-left: 19px; }
.pg.last { width: 18px; margin-left: 32px; }

.content { flex: 1; min-width: 0; }
.mail { padding: 17px 0 0 17.500px; }
h1 { display: flex; align-items: center; font-size: 26.25px; line-height: 32px; font-weight: 700; white-space: nowrap; }
.ext { width: 18px; height: 18px; margin: 3px 0 0 10px; }
.meta { display: flex; margin-top: 9px; }
.avatar { width: 70px; height: 70px; margin-right: 19px; }
dl { display: grid; grid-template-columns: 59px auto; grid-auto-rows: 28.75px; line-height: 28.75px; }
.link, .links { color: #00acff; }
.links { display: flex; align-items: center; height: 28px; margin-top: 4.500px; font-size: 15.75px; }
.links svg { width: 20.5px; height: 20.5px; fill: currentColor; }
.links span { margin: -2px 14px 0 5.500px; }
.links span:last-child { margin-left: 6px; }
.body { margin-top: 51px; font: 14.84px/24.35px "DejaVu Sans Mono", "Liberation Mono", monospace; }

/* taskbar */
.taskbar { height: 59px; flex: none; display: flex; position: relative; color: #fff; font-family: "Open Sans", "Noto Sans", sans-serif; font-size: 14.5px; line-height: 20px; background: linear-gradient(90deg, #1e222b 0, #1c2431 320px, #12234f 390px, #13215a 560px, #211d5c 670px, #142056 800px, #152054 900px, #1c1e3e 1010px, #1d1f3a 1070px, #12215a 1250px, #17204a 1330px, #1e2230 1400px, #1e222b 100%); }
.weather { width: 530px; display: flex; padding: 9px 0 0 27px; gap: 12px; }
.weather div { font-size: 14.2px; }
.weather .dim { color: #c3c5ca; }
.sunny { position: relative; padding-top: 7px; }
.badge { position: absolute; right: -7px; top: -6px; min-width: 20px; height: 20px; border-radius: 10px; background: #47b8f5; color: #0a1522; font-weight: 400; font-size: 13px; line-height: 20px; text-align: center; }
.badge.pink { right: -6px; top: -2px; background: #ff99a4; color: #1a1012; }
.badge.brown { background: #8d6e63; color: #e8dcd8; font-family: Roboto, sans-serif; font-weight: 500; font-size: 12px; }
.apps { display: flex; align-items: center; }
.win { width: 29px; height: 29px; margin-top: 1px; }
.tsearch { width: 275px; height: 40px; margin: 0 2px 0 17px; border-radius: 20px; background: rgba(255,255,255,.16); border-top: 1px solid rgba(255,255,255,.2); display: flex; align-items: center; padding: 0 9px 0 15px; font-size: 16px; color: #dfe2ec; }
.tsearch span { flex: 1; margin-left: 12px; }
.app-ic { position: relative; width: 50px; height: 50px; margin-left: 5px; display: grid; place-items: center; border-radius: 5px; }
.app-ic svg { width: 30px; height: 30px; }
.app-ic:nth-child(3) { margin-left: 3px; }
.app-ic.focus { background: rgba(255,255,255,.08); box-shadow: inset 0 0 0 1px rgba(255,255,255,.06); }
.app-ic .badge { right: 4px; top: 4px; }
.app-ic .badge:not(.brown) { min-width: 20px; padding: 0 3px; }
.run { position: absolute; left: 21px; bottom: 1px; width: 8px; height: 4px; border-radius: 2px; background: #8f94a6; }
.run.on { left: 15px; width: 20px; background: #4cc2ff; }
.skype { position: absolute; left: 0; right: 4px; top: 12px; text-align: center; font-weight: 700; font-size: 20px; line-height: 26px; }
.tray { margin-left: auto; width: 324px; display: flex; align-items: center; font-size: 14.8px; }
.lang { width: 30px; margin-left: 26px; text-align: center; font-size: 14.5px; }
.wifi { margin-left: 22px; }
.vol { margin-left: 10px; }
.bat { margin-left: 9px; }
.clock { width: 86px; margin-left: 12px; text-align: right; white-space: nowrap; }
.bell { margin-left: 10px; }
```
